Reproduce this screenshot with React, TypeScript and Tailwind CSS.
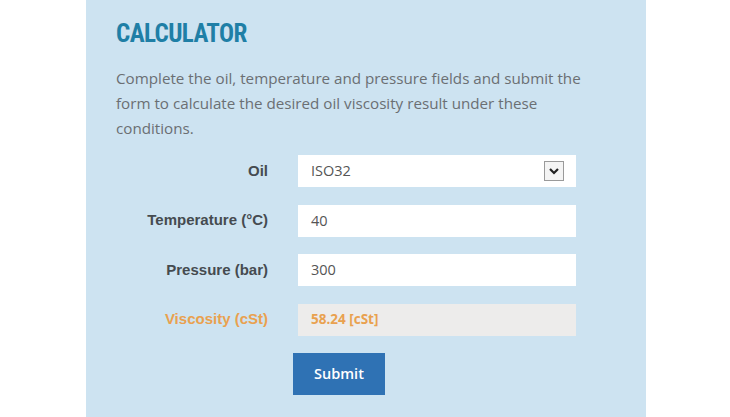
import React from "react";

function Row({ label, children, orange }: { label: string; children: React.ReactNode; orange?: boolean }) {
  return (
    <div className="flex items-center h-[32px]">
      <label
        className={`w-[152px] text-right font-bold text-[15px] font-['Liberation_Sans',Arial,sans-serif] ${orange ? "text-[#e9a14f]" : "text-[#454b50]"}`}
      >
        {label}
      </label>
      <div className="ml-[30px] w-[278px] h-[32px]">{children}</div>
    </div>
  );
}

export default function App() {
  return (
    <div className="w-[730px] h-[417px] bg-white flex overflow-hidden font-['Open_Sans','Noto_Sans',sans-serif]">
      <div className="ml-[86px] w-[560px] h-[417px] bg-[#cde3f1] pl-[30px] pr-[40px]">
        <h1 className="mt-[22px] text-[25px] leading-[24px] font-bold text-[#1f7fa6] tracking-[-0.6px] font-['Liberation_Sans_Narrow','Roboto_Condensed',Roboto,sans-serif]">
          CALCULATOR
        </h1>
        <p className="mt-[20px] w-[482px] text-[15.2px] leading-[25px] text-[#6b6f73]">
          Complete the oil, temperature and pressure fields and submit the form to calculate the desired oil viscosity result under these conditions.
        </p>
        <div className="mt-[14px] flex flex-col gap-[17.5px]">
          <Row label="Oil">
            <div className="h-full bg-white flex items-center justify-between pl-[13px] pr-[12px] text-[14.5px] text-[#555]">
              <span>ISO32</span>
              <span className="w-[20px] h-[20px] border border-[#9a9a9a] bg-[#f4f4f4] flex items-center justify-center">
                <svg width="12" height="8" viewBox="0 0 12 8">
                  <path d="M2 2 L6 6 L10 2" stroke="#222" strokeWidth="2.2" fill="none" />
                </svg>
              </span>
            </div>
          </Row>
          <Row label="Temperature (°C)">
            <div className="h-full bg-white flex items-center pl-[13px] text-[14.5px] text-[#555]">40</div>
          </Row>
          <Row label="Pressure (bar)">
            <div className="h-full bg-white flex items-center pl-[13px] text-[14.5px] text-[#555]">300</div>
          </Row>
          <Row label="Viscosity (cSt)" orange>
            <div className="h-full bg-[#edeceb] flex items-center pl-[13px] text-[13.5px] font-bold text-[#e9a14f]">58.24 [cSt]</div>
          </Row>
        </div>
        <div className="mt-[17px] ml-[177px]">
          <button className="w-[92px] h-[42px] bg-[#2f72b4] text-white text-[14.5px] font-semibold">
            Submit
          </button>
        </div>
      </div>
    </div>
  );
}
